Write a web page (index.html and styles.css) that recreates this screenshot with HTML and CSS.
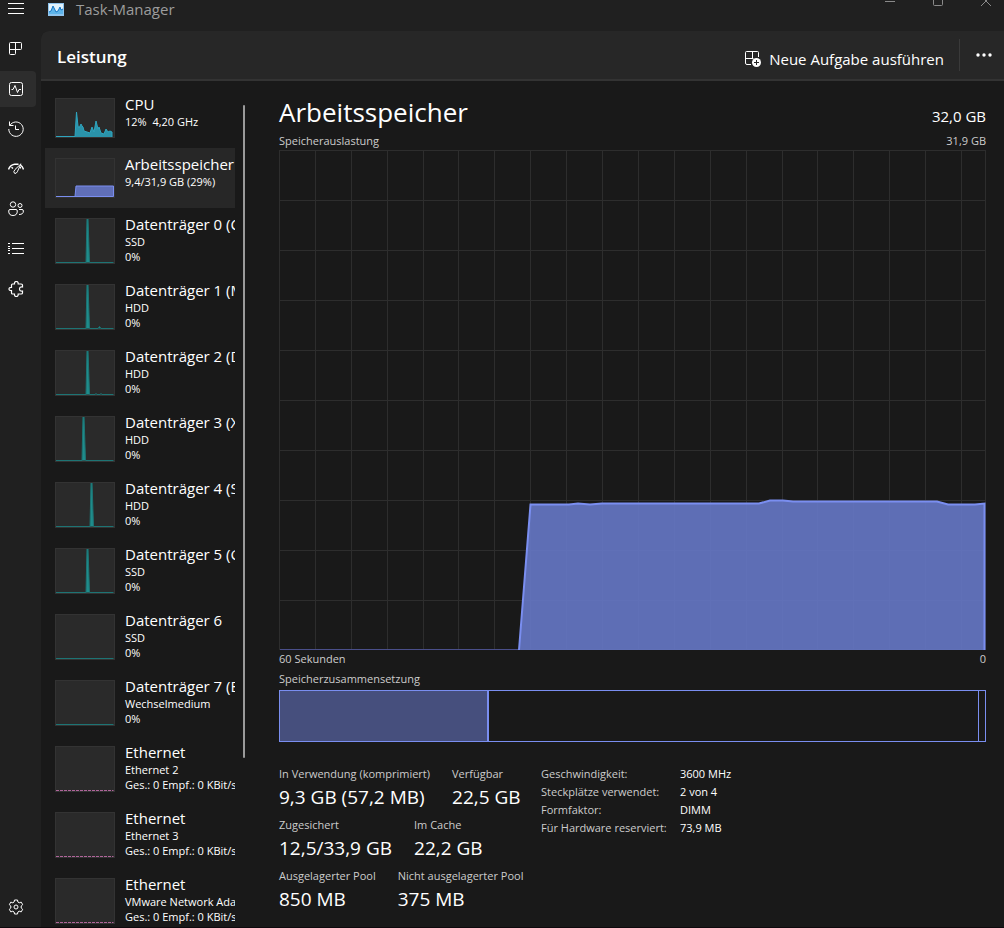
FILE: index.html
```html
<!DOCTYPE html>
<html lang="de">
<head>
    <meta charset="UTF-8">
    <meta name="viewport" content="width=device-width, initial-scale=1.0">
    <title>Task-Manager</title>
    <link rel="stylesheet" href="styles.css">
</head>
<body>

<!-- Title bar -->
<header class="titlebar">
    <button class="menu-button" aria-label="Navigation">
        <svg width="16" height="12" viewBox="0 0 16 12"><path d="M0 1.5h16M0 6.5h16M0 11.5h16"/></svg>
    </button>
    <svg class="app-icon" width="16" height="13" viewBox="0 0 16 13">
        <rect width="16" height="13" fill="#8fc4ee"/>
        <rect x="1" y="1" width="14" height="10" fill="#e2f3fd"/>
        <path d="M1 9l2-1 2-5 2 4 1 2 2-1 2-4 1 3 2-1v5H1z" fill="#5db4ea"/>
        <path d="M1 9l2-1 2-5 2 4 1 2 2-1 2-4 1 3 2-1" fill="none" stroke="#1474c4"/>
    </svg>
    <span class="app-title">Task-Manager</span>
    <div class="window-controls">
        <button aria-label="Minimieren"><svg width="12" height="8" viewBox="0 0 12 8"><path d="M1 1.5h10"/></svg></button>
        <button aria-label="Maximieren"><svg width="12" height="8" viewBox="0 0 12 8"><path d="M1.500-3v7.500q0 1 1 1h7q1 0 1-1V-3"/></svg></button>
        <button aria-label="Schließen"><svg width="12" height="8" viewBox="0 0 12 8"><path d="M1 6l10-10M11 6L1-4"/></svg></button>
    </div>
</header>

<div class="window">

    <!-- Icon navigation -->
    <nav class="sidebar">
        <button aria-label="Prozesse">
            <svg width="16" height="16" viewBox="0 0 16 16"><path d="M2.500 1.500h10q1 0 1 1v5q0 1-1 1H1.500M1.500 2.500v10q0 1 1 1h4q1 0 1-1V1.500M1.500 2.500q0-1 1-1"/></svg>
        </button>
        <button class="active" aria-label="Leistung">
            <svg width="16" height="16" viewBox="0 0 16 16"><rect x="1.500" y="1.500" width="13" height="13" rx="2"/><path d="M3.500 8.500h1.500l2-4 2.500 7 1.500-3h2"/></svg>
        </button>
        <button aria-label="App-Verlauf">
            <svg width="16" height="16" viewBox="0 0 16 16"><path d="M1.500 .5v4h4M1.800 4.500A7.200 7.200 0 1 1 .8 8M7.500 4.500v4H11"/></svg>
        </button>
        <button aria-label="Autostart von Apps">
            <svg width="16" height="16" viewBox="0 0 16 16"><path stroke-width="1.400" d="M.5 8.500Q2 4 6.500 3.200M3.500 6.200L5 7.500M6.500 3.200h4M15.500 8.500q-.8-3-3-4.300M11.800 7l1.200-.6"/><path d="M13 2.800L7 8.500q-2 2.200-.6 3.700 1.800 1 2.900-1.400z"/></svg>
        </button>
        <button aria-label="Benutzer">
            <svg width="16" height="16" viewBox="0 0 16 16"><circle cx="5" cy="3.500" r="2.700"/><circle cx="12" cy="4.500" r="2"/><path d="M2 8.500h6q1.300 0 1.300 1.500 0 4.500-4.300 4.500T.7 10Q.7 8.500 2 8.500zM11 8.500h3q1.400 0 1.400 1.500 0 3.500-4.400 3.500"/></svg>
        </button>
        <button aria-label="Details">
            <svg width="16" height="16" viewBox="0 0 16 16"><path d="M4 2.500h12M4 7.500h12M4 12.500h12M0 2.500h2M0 5.500h2M0 7.500h2M0 9.500h2M0 12.500h2"/></svg>
        </button>
        <button aria-label="Dienste">
            <svg width="16" height="16" viewBox="0 0 16 16"><path stroke-width="1.200" d="M4.500 3h2q-.2-2.500 1.800-2.500T10.200 3h3q1.300 0 1.300 1v2q-3-.3-3 2t3 2v2q0 1-1.300 1h-3q.1 2.500-1.900 2.500T6.500 13h-2q-1 0-1-1V9.700Q1 9.800 1 8t2.500-1.700V4q0-1 1-1z"/></svg>
        </button>
        <button class="settings" aria-label="Einstellungen">
            <svg width="16" height="16" viewBox="0 0 16 16"><circle cx="8" cy="8" r="2"/><path d="M6.500 1h3l.4 2 1.300.8 2-.7 1.500 2.600L13.200 7v2l1.500 1.300-1.500 2.600-2-.7-1.300.8-.4 2h-3l-.4-2-1.300-.8-2 .7-1.500-2.600L2.800 9V7L1.300 5.700l1.500-2.600 2 .7L6.100 3z"/></svg>
        </button>
    </nav>

    <main class="page">
        <div class="page-header">
            <h1>Leistung</h1>
            <button class="run-task">
                <svg width="16" height="16" viewBox="0 0 16 16"><path d="M6 13.500H2q-1.500 0-1.500-1.500V1.500q0-1 1-1h11q1 0 1 1V6M.5 7.500h8M7.500.5v7"/><circle cx="11.500" cy="11.500" r="4.500" fill="#fff" stroke="none"/><path d="M9 11.500h5M11.500 9v5" stroke="#272727"/></svg>
                Neue Aufgabe ausführen
            </button>
            <button class="more" aria-label="Weitere Optionen">
                <svg width="16" height="4" viewBox="0 0 16 4"><g fill="#fff" stroke="none"><circle cx="2" cy="2" r="1.700"/><circle cx="8" cy="2" r="1.700"/><circle cx="14" cy="2" r="1.700"/></g></svg>
            </button>
        </div>

        <div class="content">
            <!-- Device list -->
            <ul class="devices">
                <li class="device short">
                    <svg class="thumb cpu" viewBox="0 0 60 40"><path d="M1 38.500H20L21.500 14 23 28l1 2 2-4 1 2 1 1 1 4 6 2 2-6 2 5 2-11 2 8 1-2 2 6 3 1 2-5 2 3 2-1 2 1v7.500z"/></svg>
                    <div class="info"><h2>CPU</h2><p>12%&nbsp; 4,20 GHz</p></div>
                </li>
                <li class="device short selected">
                    <svg class="thumb memory" viewBox="0 0 60 40"><path d="M1 38.500H20L21 28H58.500V38.500z"/></svg>
                    <div class="info"><h2>Arbeitsspeicher</h2><p>9,4/31,9 GB (29%)</p></div>
                </li>
                <li class="device">
                    <svg class="thumb disk" viewBox="0 0 60 46"><path d="M1 44.500H31L32 0h1l1.500 44.500h24"/></svg>
                    <div class="info"><h2>Datenträger 0 (C:)</h2><p>SSD</p><p>0%</p></div>
                </li>
                <li class="device">
                    <svg class="thumb disk" viewBox="0 0 60 46"><path d="M1 44.500H31L32 0h1l1.500 44.500H43l1.500-2 1.500 2h12.500"/></svg>
                    <div class="info"><h2>Datenträger 1 (M:)</h2><p>HDD</p><p>0%</p></div>
                </li>
                <li class="device">
                    <svg class="thumb disk" viewBox="0 0 60 46"><path d="M1 44.500H31L32 0h1l1.500 44.500H40l1-1 1 1h3l1-1 1 1h11.500"/></svg>
                    <div class="info"><h2>Datenträger 2 (D:)</h2><p>HDD</p><p>0%</p></div>
                </li>
                <li class="device">
                    <svg class="thumb disk" viewBox="0 0 60 46"><path d="M1 44.500H27L28 0h1l1.500 44.500h28"/></svg>
                    <div class="info"><h2>Datenträger 3 (X:)</h2><p>HDD</p><p>0%</p></div>
                </li>
                <li class="device">
                    <svg class="thumb disk" viewBox="0 0 60 46"><path d="M1 44.500H35L36 0h1l1.500 44.500h20"/></svg>
                    <div class="info"><h2>Datenträger 4 (S:)</h2><p>HDD</p><p>0%</p></div>
                </li>
                <li class="device">
                    <svg class="thumb disk" viewBox="0 0 60 46"><path d="M1 44.500H31L32 0h1l1.500 44.500h24"/></svg>
                    <div class="info"><h2>Datenträger 5 (G:)</h2><p>SSD</p><p>0%</p></div>
                </li>
                <li class="device">
                    <svg class="thumb disk" viewBox="0 0 60 46"><path d="M1 44.500h57.500"/></svg>
                    <div class="info"><h2>Datenträger 6</h2><p>SSD</p><p>0%</p></div>
                </li>
                <li class="device">
                    <svg class="thumb disk" viewBox="0 0 60 46"><path d="M1 44.500h57.500"/></svg>
                    <div class="info"><h2>Datenträger 7 (E:)</h2><p>Wechselmedium</p><p>0%</p></div>
                </li>
                <li class="device">
                    <svg class="thumb network" viewBox="0 0 60 46"><path d="M1 44.500h57.500"/></svg>
                    <div class="info"><h2>Ethernet</h2><p>Ethernet 2</p><p>Ges.: 0 Empf.: 0 KBit/s</p></div>
                </li>
                <li class="device">
                    <svg class="thumb network" viewBox="0 0 60 46"><path d="M1 44.500h57.500"/></svg>
                    <div class="info"><h2>Ethernet</h2><p>Ethernet 3</p><p>Ges.: 0 Empf.: 0 KBit/s</p></div>
                </li>
                <li class="device">
                    <svg class="thumb network" viewBox="0 0 60 46"><path d="M1 44.500h57.500"/></svg>
                    <div class="info"><h2>Ethernet</h2><p>VMware Network Adapter</p><p>Ges.: 0 Empf.: 0 KBit/s</p></div>
                </li>
            </ul>
            <div class="scrollbar"></div>

            <!-- Memory details -->
            <section class="details">
                <div class="details-header">
                    <h2>Arbeitsspeicher</h2>
                    <span class="total">32,0 GB</span>
                </div>
                <div class="caption"><span>Speicherauslastung</span><span>31,9 GB</span></div>

                <svg class="chart" viewBox="0 0 707 500" preserveAspectRatio="none">
                    <path class="grid" d="M36.500 0v500M72.500 0v500M108.500 0v500M144.500 0v500M179.500 0v500M215.500 0v500M251.500 0v500M287.500 0v500M323.500 0v500M359.500 0v500M395.500 0v500M431.500 0v500M467.500 0v500M503.500 0v500M538.500 0v500M574.500 0v500M610.500 0v500M646.500 0v500M682.500 0v500"/>
                    <path class="grid" d="M0 50.500h707M0 100.500h707M0 150.500h707M0 200.500h707M0 250.500h707M0 300.500h707M0 350.500h707M0 400.500h707M0 450.500h707"/>
                    <rect class="grid" x="0.500" y="0.500" width="706" height="499"/>
                    <path class="baseline" d="M1 499.500h239"/>
                    <path class="area" d="M240 500L251.500 354.500H290L299 353.500 311 354.500 323 353.500H480L491 350.500H504L514 351.500H658L669 354.500H696L705.500 353.500V500"/>
                </svg>

                <div class="caption"><span>60 Sekunden</span><span>0</span></div>
                <div class="caption composition-title">Speicherzusammensetzung</div>
                <div class="composition">
                    <div class="used"></div>
                    <div class="standby"></div>
                    <div class="free"></div>
                </div>

                <div class="stats">
                    <div class="usage">
                        <dl>
                            <div><dt>In Verwendung (komprimiert)</dt><dd>9,3 GB (57,2 MB)</dd></div>
                            <div><dt>Verfügbar</dt><dd>22,5 GB</dd></div>
                        </dl>
                        <dl>
                            <div><dt>Zugesichert</dt><dd>12,5/33,9 GB</dd></div>
                            <div><dt>Im Cache</dt><dd>22,2 GB</dd></div>
                        </dl>
                        <dl>
                            <div><dt>Ausgelagerter Pool</dt><dd>850 MB</dd></div>
                            <div><dt>Nicht ausgelagerter Pool</dt><dd>375 MB</dd></div>
                        </dl>
                    </div>
                    <table class="hardware">
                        <tr><th scope="row">Geschwindigkeit:</th><td>3600 MHz</td></tr>
                        <tr><th scope="row">Steckplätze verwendet:</th><td>2 von 4</td></tr>
                        <tr><th scope="row">Formfaktor:</th><td>DIMM</td></tr>
                        <tr><th scope="row">Für Hardware reserviert:</th><td>73,9 MB</td></tr>
                    </table>
                </div>
            </section>
        </div>
    </main>
</div>

</body>
</html>
```
FILE: styles.css
```css
* {
    box-sizing: border-box;
}

body {
    display: flex;
    flex-direction: column;
    height: 100vh;
    margin: 0;
    overflow: hidden;
    background-color: #202020;
    border-bottom: 1px solid #0e090d;
    color: #fff;
    font-family: "Segoe UI", "Open Sans", sans-serif;
    font-size: 12px;
}

h1, h2, p, ul, dl, dd {
    margin: 0;
    padding: 0;
    font-weight: 400;
}

button {
    display: flex;
    align-items: center;
    justify-content: center;
    padding: 0;
    border: 0;
    background: none;
    color: inherit;
    font: inherit;
}

svg {
    display: block;
    flex: none;
    fill: none;
    stroke: #fff;
}

/* Title bar */
.titlebar {
    display: flex;
    align-items: flex-start;
    height: 31px;
    flex: none;
}

.menu-button {
    width: 32px;
    height: 16px;
}

.app-icon {
    margin: 3px 12px 0 16px;
    stroke: none;
}

.app-title {
    line-height: 18px;
    font-size: 15px;
    color: #9c9c9c;
}

.window-controls {
    display: flex;
    gap: 36px;
    margin-left: auto;
    padding-right: 12px;
}

.window-controls svg {
    stroke: #8a8a8a;
}

.window {
    display: flex;
    flex: 1;
    min-height: 0;
}

/* Icon navigation */
.sidebar {
    display: flex;
    flex-direction: column;
    gap: 4px;
    width: 41px;
    flex: none;
    padding-bottom: 2px;
}

.sidebar button {
    width: 36px;
    height: 36px;
    padding-right: 4px;
    border-radius: 0 4px 4px 0;
}

.sidebar .active {
    background-color: #2d2d2d;
}

.sidebar .settings {
    margin-top: auto;
}

.page {
    display: flex;
    flex-direction: column;
    flex: 1;
    min-width: 0;
    background-color: #191919;
    border-radius: 8px 0 0 0;
    overflow: hidden;
}

.page-header {
    display: flex;
    align-items: center;
    height: 50px;
    flex: none;
    padding-left: 16px;
    background-color: #272727;
    border-bottom: 2px solid #333;
}

.page-header h1 {
    margin-right: auto;
    padding-top: 2px;
    font-size: 17px;
    font-weight: 600;
}

.run-task {
    gap: 8px;
    margin-right: 15px;
    padding-top: 8px;
    font-size: 15px;
}

.more {
    width: 45px;
    height: 32px;
    border-left: 1px solid #3a3a3a;
    padding-left: 4px;
}

.content {
    display: flex;
    flex: 1;
    min-height: 0;
}

/* Device list */
.devices {
    width: 194px;
    flex: none;
    padding: 7px 0 0 4px;
    list-style: none;
    overflow: hidden;
}

.device {
    display: flex;
    gap: 10px;
    height: 66px;
    padding: 6px 0 0 10px;
    overflow: hidden;
    white-space: nowrap;
}

.device.short {
    height: 60px;
}

.device.selected {
    background-color: #272727;
}

.thumb {
    width: 60px;
    height: 46px;
    margin-top: 4px;
    background-color: #2a2a2a;
    outline: 1px solid #333;
    outline-offset: -1px;
}

.short .thumb {
    height: 40px;
}

.cpu {
    fill: #2a93aa;
    stroke: #2fa5bf;
}

.memory {
    fill: #606fb8;
    stroke: #7a8ef0;
}

.disk {
    fill: #1f8d8c;
    stroke: #1d7474;
}

.network {
    stroke: #b0659a;
    stroke-dasharray: 3 1;
}

.info h2 {
    font-size: 15px;
    line-height: 20px;
}

.info p {
    font-size: 11px;
    line-height: 15px;
}

.scrollbar {
    width: 2px;
    height: 653px;
    flex: none;
    margin: 24px 0 0 8px;
    border-radius: 1px;
    background-color: #9a9a9a;
}

/* Memory details */
.details {
    flex: 1;
    min-width: 0;
    padding: 11px 18px 0 34px;
}

.details-header {
    display: flex;
    align-items: flex-end;
    justify-content: space-between;
    height: 40px;
}

.details-header h2 {
    font-size: 26px;
    line-height: 40px;
}

.total {
    font-size: 15px;
    line-height: 32px;
}

.caption {
    display: flex;
    justify-content: space-between;
    font-size: 11px;
    line-height: 18px;
    color: #ccc;
}

.chart {
    width: 100%;
    height: 500px;
}

.grid {
    stroke: #2d2d2d;
    shape-rendering: crispEdges;
}

.baseline {
    stroke: #4a4f8a;
}

.area {
    fill: #687acb;
    fill-opacity: .88;
    stroke: #7a8ef0;
    stroke-width: 2;
}

.composition-title {
    padding-top: 2px;
}

.composition {
    display: flex;
    height: 52px;
    margin-top: 2px;
    border: 1px solid #7a8ef0;
}

.used {
    width: 209px;
    background-color: #464f7d;
    border-right: 2px solid #7a8ef0;
}

.standby {
    flex: 1;
}

.free {
    width: 1%;
    border-left: 1px solid #7a8ef0;
}

.stats {
    display: flex;
    padding-top: 23px;
    line-height: 18px;
}

.usage {
    width: 262px;
    flex: none;
}

.usage dl {
    display: flex;
    gap: 22px;
    height: 51px;
    white-space: nowrap;
}

.usage dt {
    font-size: 11px;
    color: #ccc;
}

.usage dd {
    font-size: 19px;
    line-height: 28px;
}

.hardware {
    height: 72px;
    border-collapse: collapse;
    font-size: 11px;
}

.hardware th {
    width: 139px;
    padding: 0;
    font-weight: 400;
    text-align: left;
    color: #ccc;
}

.hardware td {
    padding: 0;
}
```
